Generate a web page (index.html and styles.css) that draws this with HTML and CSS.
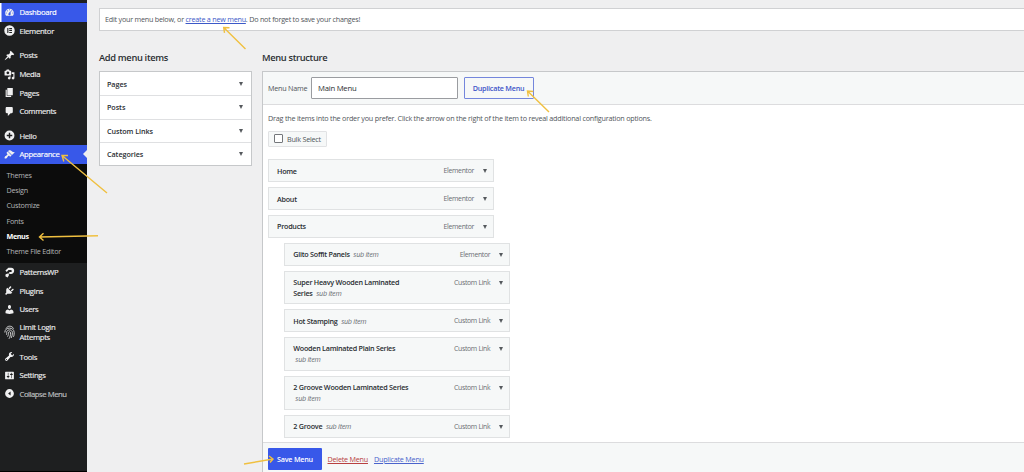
FILE: index.html
```html
<!DOCTYPE html>
<html lang="en">
<head>
    <meta charset="UTF-8">
    <meta name="viewport" content="width=device-width, initial-scale=1.0">
    <title>Menus</title>
    <link rel="stylesheet" href="styles.css">
</head>
<body>
    <div class="sidebar">
        <a class="nav-item active first">
            <svg class="icon" viewBox="0 0 20 20"><path d="M3.76 16h12.48c1.1-1.37 1.76-3.11 1.76-5 0-4.42-3.58-8-8-8s-8 3.58-8 8c0 1.89.66 3.63 1.76 5zM10 4c.55 0 1 .45 1 1s-.45 1-1 1-1-.45-1-1 .45-1 1-1zM6 6c.55 0 1 .45 1 1s-.45 1-1 1-1-.45-1-1 .45-1 1-1zm8 0c.55 0 1 .45 1 1s-.45 1-1 1-1-.45-1-1 .45-1 1-1zm-5.37 5.55L12 7v6c0 1.1-.9 2-2 2s-2-.9-2-2c0-.57.24-1.08.63-1.45zM4 10c.55 0 1 .45 1 1s-.45 1-1 1-1-.45-1-1 .45-1 1-1zm12 0c.55 0 1 .45 1 1s-.45 1-1 1-1-.45-1-1 .45-1 1-1z"/></svg>
            <span>Dashboard</span>
        </a>
        <a class="nav-item">
            <svg class="icon" viewBox="0 0 20 20"><path fill-rule="evenodd" d="M10 .5a9.5 9.5 0 1 0 0 19 9.5 9.5 0 0 0 0-19zM6 5.5h2v9H6zM9.5 5.5h5v2h-5zM9.5 9h5v2h-5zM9.5 12.5h5v2h-5z"/></svg>
            <span>Elementor</span>
        </a>
        <div class="separator"></div>
        <a class="nav-item">
            <svg class="icon" viewBox="0 0 20 20"><path d="M10.44 3.02l1.82-1.82 6.36 6.35-1.83 1.82c-1.05-.68-2.48-.57-3.41.36l-.75.75c-.92.93-1.04 2.35-.35 3.41l-1.83 1.82-2.41-2.41-2.8 2.79c-.42.42-3.38 2.71-3.8 2.29s1.86-3.39 2.28-3.81l2.79-2.79L4.1 9.36l1.83-1.82c1.05.69 2.48.57 3.4-.36l.75-.75c.93-.92 1.05-2.35.36-3.41z"/></svg>
            <span>Posts</span>
        </a>
        <a class="nav-item">
            <svg class="icon" viewBox="0 0 20 20"><path d="M13 11V4c0-.55-.45-1-1-1h-1.67L9 1H5L3.67 3H2c-.55 0-1 .45-1 1v7c0 .55.45 1 1 1h10c.55 0 1-.45 1-1zM7 4.5c1.38 0 2.5 1.12 2.5 2.5S8.38 9.5 7 9.5 4.5 8.38 4.5 7 5.62 4.5 7 4.5zM14 6h5v10.5c0 1.38-1.12 2.5-2.5 2.5S14 17.88 14 16.5s1.12-2.5 2.5-2.5c.17 0 .34.02.5.05V9h-3V6zm-4 8.05V13h2v3.5c0 1.38-1.12 2.5-2.5 2.5S7 17.88 7 16.5 8.12 14 9.5 14c.17 0 .34.02.5.05z"/></svg>
            <span>Media</span>
        </a>
        <a class="nav-item">
            <svg class="icon" viewBox="0 0 20 20"><path d="M6 15V2h10v13H6zm-1 1h8v2H3V5h2v11z"/></svg>
            <span>Pages</span>
        </a>
        <a class="nav-item">
            <svg class="icon" viewBox="0 0 20 20"><path d="M5 2h9c1.1 0 2 .9 2 2v7c0 1.1-.9 2-2 2h-2l-5 5v-5H5c-1.1 0-2-.9-2-2V4c0-1.1.9-2 2-2z"/></svg>
            <span>Comments</span>
        </a>
        <div class="separator"></div>
        <a class="nav-item">
            <svg class="icon" viewBox="0 0 20 20"><path fill-rule="evenodd" d="M10 1a9 9 0 1 0 0 18 9 9 0 0 0 0-18zM8.7 5h2.6v3.7H15v2.6h-3.7V15H8.7v-3.7H5V8.7h3.7z"/></svg>
            <span>Hello</span>
        </a>
        <a class="nav-item active current">
            <svg class="icon" viewBox="0 0 20 20"><path d="M14.48 11.06L7.41 3.99l1.5-1.5c.5-.56 2.3-.47 3.51.32 1.21.8 1.43 1.28 2.91 2.1 1.18.64 2.45 1.26 4.45.85zm-.71.71L6.7 4.7 4.93 6.47c-.39.39-.39 1.02 0 1.41l1.06 1.06c.39.39.39 1.03 0 1.42-.6.6-1.43 1.11-2.21 1.69-.35.26-.7.53-1.01.84C1.43 14.23.4 16.08 1.4 17.07c.99 1 2.84-.03 4.18-1.36.31-.31.58-.66.85-1.02.57-.78 1.08-1.61 1.69-2.21.39-.39 1.02-.39 1.41 0l1.06 1.06c.39.39 1.02.39 1.41 0z"/></svg>
            <span>Appearance</span>
        </a>
        <div class="submenu">
            <a>Themes</a>
            <a>Design</a>
            <a>Customize</a>
            <a>Fonts</a>
            <a class="selected">Menus</a>
            <a>Theme File Editor</a>
        </div>
        <a class="nav-item">
            <svg class="icon" viewBox="0 0 20 20"><path d="M2.500 6.500L8 1.500h5c3.200 0 5.500 2.200 5.500 5.200 0 3.300-2.500 5.800-5.700 5.800H9.500V9h2.800c1.200 0 1.900-.8 1.900-1.900s-.7-1.800-1.900-1.800H8.200L5 9zM3 13l5.500-1.500.5 3.500-2.500 4L2.500 17z"/></svg>
            <span>PatternsWP</span>
        </a>
        <a class="nav-item">
            <svg class="icon" viewBox="0 0 20 20"><path d="M13.11 4.36L9.87 7.6 8 5.73l3.24-3.24c.35-.34 1.05-.2 1.56.32.52.51.66 1.21.31 1.55zm-8 1.77l.91-1.12 9.01 9.01-1.19.84c-.71.71-2.63 1.16-3.82 1.16H6.14L4.9 17.26c-.59.59-1.54.59-2.12 0-.59-.58-.59-1.53 0-2.12l1.24-1.24v-3.88c0-1.13.4-3.19 1.09-3.89zm7.26 3.97l3.24-3.24c.34-.35 1.04-.21 1.55.31.52.51.66 1.21.31 1.55l-3.24 3.25z"/></svg>
            <span>Plugins</span>
        </a>
        <a class="nav-item">
            <svg class="icon" viewBox="0 0 20 20"><path d="M10 9.25c-2.27 0-2.73-3.44-2.73-3.44C7 4.02 7.82 2 9.97 2c2.16 0 2.98 2.02 2.71 3.81 0 0-.41 3.44-2.68 3.44zm0 2.57L12.72 10c2.39 0 4.52 2.33 4.52 4.53v2.49s-3.65 1.13-7.24 1.13c-3.65 0-7.24-1.13-7.24-1.13v-2.49c0-2.25 1.94-4.48 4.47-4.48z"/></svg>
            <span>Users</span>
        </a>
        <a class="nav-item two-line">
            <svg class="icon finger" viewBox="0 0 20 26"><path d="M3.500 6C5.500 2.500 8 1.500 10.500 1.500S16 3 17.500 6M1.500 13C1.500 7.500 5.500 5 10 5s8.500 3 8.500 8-.5 6-1.500 8M4.500 17c.5-1.500.3-2.500.3-4C4.800 10 7.500 8.300 10 8.300s5.300 2 5.300 5c0 4-.8 7-2.300 9.700M6.500 20.500c1.500-2.500 1.500-5 1.600-7.200.1-1 .9-1.700 1.900-1.700s2 .8 2 1.900c0 4-1 8-3 11"/></svg>
            <span>Limit Login<br>Attempts</span>
        </a>
        <a class="nav-item">
            <svg class="icon" viewBox="0 0 20 20"><path d="M16.68 9.77c-1.34 1.34-3.3 1.67-4.95.99l-5.41 6.52c-.99.99-2.59.99-3.58 0s-.99-2.59 0-3.57l6.52-5.42c-.68-1.65-.35-3.61.99-4.95 1.28-1.28 3.12-1.62 4.72-1.06l-2.89 2.89 2.82 2.82 2.86-2.87c.53 1.58.18 3.39-1.08 4.65zM3.81 16.21c.4.39 1.04.39 1.43 0 .4-.4.4-1.04 0-1.43-.39-.4-1.03-.4-1.43 0-.39.39-.39 1.03 0 1.43z"/></svg>
            <span>Tools</span>
        </a>
        <a class="nav-item">
            <svg class="icon" viewBox="0 0 20 20"><path d="M18 16V4c0-.55-.45-1-1-1H3c-.55 0-1 .45-1 1v12c0 .55.45 1 1 1h14c.55 0 1-.45 1-1zM8 11h1c.55 0 1 .45 1 1s-.45 1-1 1H8v1.500c0 .28-.22.5-.5.5s-.5-.22-.5-.5V13H6c-.55 0-1-.45-1-1s.45-1 1-1h1V5.500c0-.28.22-.5.5-.5s.5.22.5.5V11zm5-2h-1c-.55 0-1-.45-1-1s.45-1 1-1h1V5.500c0-.28.22-.5.5-.5s.5.22.5.5V7h1c.55 0 1 .45 1 1s-.45 1-1 1h-1v5.500c0 .28-.22.5-.5.5s-.5-.22-.5-.5V9z"/></svg>
            <span>Settings</span>
        </a>
        <a class="nav-item collapse">
            <svg class="icon" viewBox="0 0 20 20"><path fill-rule="evenodd" d="M10 2a8 8 0 1 0 0 16 8 8 0 0 0 0-16zM12 6.500v7L7.500 10z"/></svg>
            <span>Collapse Menu</span>
        </a>
    </div>

    <div class="content">
        <div class="notice">Edit your menu below, or <a>create a new menu</a>. Do not forget to save your changes!</div>
        <div class="columns">
            <div class="add-items">
                <h2>Add menu items</h2>
                <div class="accordion">
                    <div class="acc-row">Pages<i class="caret"></i></div>
                    <div class="acc-row">Posts<i class="caret"></i></div>
                    <div class="acc-row">Custom Links<i class="caret"></i></div>
                    <div class="acc-row">Categories<i class="caret"></i></div>
                </div>
            </div>
            <div class="structure">
                <h2>Menu structure</h2>
                <div class="panel">
                    <div class="panel-header">
                        <label>Menu Name</label>
                        <div class="name-input">Main Menu</div>
                        <div class="btn-outline">Duplicate Menu</div>
                    </div>
                    <div class="panel-body">
                        <p>Drag the items into the order you prefer. Click the arrow on the right of the item to reveal additional configuration options.</p>
                        <div class="bulk"><span class="checkbox"></span><span class="bulk-label">Bulk Select</span></div>
                        <div class="menu-list">
                            <div class="menu-item">
                                <div class="title"><b>Home</b></div>
                                <span class="type">Elementor</span><i class="caret"></i>
                            </div>
                            <div class="menu-item">
                                <div class="title"><b>About</b></div>
                                <span class="type">Elementor</span><i class="caret"></i>
                            </div>
                            <div class="menu-item">
                                <div class="title"><b>Products</b></div>
                                <span class="type">Elementor</span><i class="caret"></i>
                            </div>
                            <div class="menu-item sub">
                                <div class="title"><b>Glito Soffit Panels</b> <em>sub item</em></div>
                                <span class="type">Elementor</span><i class="caret"></i>
                            </div>
                            <div class="menu-item sub tall">
                                <div class="title"><b>Super Heavy Wooden Laminated<br>Series</b> <em>sub item</em></div>
                                <span class="type">Custom Link</span><i class="caret"></i>
                            </div>
                            <div class="menu-item sub">
                                <div class="title"><b>Hot Stamping</b> <em>sub item</em></div>
                                <span class="type">Custom Link</span><i class="caret"></i>
                            </div>
                            <div class="menu-item sub tall">
                                <div class="title"><b>Wooden Laminated Plain Series</b><br><em>sub item</em></div>
                                <span class="type">Custom Link</span><i class="caret"></i>
                            </div>
                            <div class="menu-item sub tall">
                                <div class="title"><b>2 Groove Wooden Laminated Series</b><br><em>sub item</em></div>
                                <span class="type">Custom Link</span><i class="caret"></i>
                            </div>
                            <div class="menu-item sub">
                                <div class="title"><b>2 Groove</b> <em>sub item</em></div>
                                <span class="type">Custom Link</span><i class="caret"></i>
                            </div>
                        </div>
                    </div>
                    <div class="panel-footer">
                        <div class="btn-save">Save Menu</div>
                        <a class="delete">Delete Menu</a>
                        <a class="duplicate">Duplicate Menu</a>
                    </div>
                </div>
            </div>
        </div>
    </div>

    <!-- pointer arrows -->
    <svg class="arrows" viewBox="0 0 1024 472">
        <path d="M245.500 49L223.700 27.500M224.500 32.800L223.700 27.500L229.500 27.800"/>
        <path d="M107 193L62 155.500M63.800 161.500L62 155.500L68 155.500"/>
        <path d="M98 235.700L39.500 237M43.500 233.300L39.500 237L43.500 240.500"/>
        <path d="M549 112L527.500 91M528.300 96.500L527.500 91L533.300 91.500"/>
        <path d="M244 464L273 459M269 456L273 459L270 462.500"/>
    </svg>
</body>
</html>
```
FILE: styles.css
```css
:root{
    --blue: #3858e9;
    --link: #3c59c8;
    --gray-bg: #efeff0;
    --light: #f6f8f8;
    --border: #c6c8ca;
    --text: #50555a;
    --dark: #2a2e32;
}

*{
    box-sizing: border-box;
    padding: 0;
    margin: 0;
}
body{
    width: 1024px;
    height: 472px;
    display: flex;
    overflow: hidden;
    position: relative;
    background: var(--gray-bg);
    color: var(--text);
    font-family: "Open Sans", "Noto Sans", sans-serif;
    font-size: 7.200px;
    letter-spacing: -0.220px;
    line-height: 10px;
}

/* sidebar */
.sidebar{
    width: 87px;
    height: 472px;
    flex-shrink: 0;
    padding-top: 3px;
    background: #1e1f20;
    border-bottom: 1px solid #000;
}
.nav-item{
    height: 18.650px;
    padding-left: 4.300px;
    display: flex;
    align-items: center;
    gap: 4.200px;
    color: #eeeeef;
    font-size: 7.700px;
    letter-spacing: -0.300px;
    -webkit-text-stroke: 0.15px currentColor;
}
.icon{
    width: 11px;
    height: 11px;
    flex-shrink: 0;
    fill: #f0f0f1;
}
.finger{
    height: 15px;
    fill: none;
    stroke: #d6d7d8;
    stroke-width: 1.700;
}
.active{
    background: var(--blue);
    color: #fff;
}
.first{
    box-shadow: inset 1.500px 0 #fff;
}
.current{
    position: relative;
}
.current::after{
    content: '';
    position: absolute;
    right: 0;
    top: 5px;
    border: 4.500px solid transparent;
    border-left: 0;
    border-right-color: var(--gray-bg);
}
.separator{
    height: 5.850px;
}
.submenu{
    height: 99px;
    padding: 4px 0 0 6.500px;
    background: #0c0c0c;
}
.submenu a{
    display: block;
    height: 15.250px;
    line-height: 15.250px;
    color: #b4b6b8;
}
.submenu .selected{
    color: #fff;
    font-weight: 700;
    letter-spacing: -0.380px;
}
.two-line{
    height: 28.500px;
    line-height: 9.800px;
}
.collapse{
    color: #c0c2c4;
    letter-spacing: -0.450px;
}

/* main area */
.content{
    flex-grow: 1;
    padding: 8.400px 0 0 12px;
}
.notice{
    height: 22.300px;
    padding-left: 5px;
    line-height: 21px;
    letter-spacing: -0.225px;
    background: #fff;
    border: 1px solid #d0d1d3;
    border-right: 0;
}
.notice a{
    color: var(--link);
    text-decoration: underline;
}
.columns{
    display: flex;
    gap: 10.500px;
    margin-top: 20px;
}
h2{
    height: 20.300px;
    line-height: 14px;
    font-size: 9.300px;
    font-weight: 600;
    letter-spacing: -0.330px;
    color: var(--dark);
}
.add-items{
    width: 152.500px;
    flex-shrink: 0;
}
.accordion{
    border: 1px solid var(--border);
    background: #fff;
}
.acc-row{
    height: 23.300px;
    padding: 0 8px 0 7px;
    display: flex;
    align-items: center;
    justify-content: space-between;
    color: var(--dark);
    font-weight: 600;
    letter-spacing: -0.060px;
}
.acc-row + .acc-row{
    border-top: 1px solid #dfe0e2;
}
.caret{
    width: 0;
    height: 0;
    border: 2.500px solid transparent;
    border-top: 4px solid #55595d;
    border-bottom: 0;
}
.structure{
    flex-grow: 1;
}
.panel{
    background: #fff;
    border: 1px solid var(--border);
    border-right: 0;
}
.panel-header{
    height: 33px;
    padding-left: 5px;
    display: flex;
    align-items: center;
    background: var(--light);
    border-bottom: 1px solid #dcdcde;
}
.panel-header label{
    width: 43px;
}
.name-input{
    width: 147px;
    height: 22px;
    padding-left: 6px;
    line-height: 21px;
    font-size: 7.700px;
    letter-spacing: -0.230px;
    color: var(--dark);
    background: #fff;
    border: 1px solid #9a9ca0;
    border-radius: 1px;
}
.btn-outline{
    width: 70px;
    height: 22px;
    margin-left: 5.500px;
    line-height: 20px;
    text-align: center;
    font-weight: 600;
    color: #4055c8;
    border: 1px solid #7486dc;
    border-radius: 1px;
}
.panel-body{
    height: 337px;
    padding: 8.400px 0 0 5px;
}
.panel-body p{
    letter-spacing: -0.205px;
}
.bulk{
    width: 59px;
    height: 16px;
    margin-top: 7.600px;
    padding-left: 5px;
    display: flex;
    align-items: center;
    gap: 4px;
    background: var(--light);
    border: 1px solid #e1e2e4;
    border-radius: 1px;
}
.checkbox{
    width: 9px;
    height: 9px;
    background: #fff;
    border: 1px solid #74777b;
    border-radius: 1px;
}
.menu-list{
    margin-top: 12.500px;
    display: flex;
    flex-direction: column;
    gap: 4.900px;
}
.menu-item{
    width: 226px;
    height: 22.900px;
    padding: 6px 6.500px 0 8px;
    display: flex;
    align-items: flex-start;
    background: var(--light);
    border: 1px solid #e0e2e3;
}
.sub{
    margin-left: 16.300px;
}
.tall{
    height: 33.900px;
}
.title{
    flex-grow: 1;
    margin-top: -0.700px;
    line-height: 10.800px;
    letter-spacing: -0.260px;
}
.title b{
    font-weight: 600;
    color: var(--dark);
}
.title em{
    color: #6a6e73;
    margin-left: 2px;
}
.type{
    color: #6a6e73;
    margin-right: 8.500px;
    font-size: 6.900px;
    letter-spacing: -0.320px;
}
.menu-item .caret{
    margin-top: 3px;
}
.panel-footer{
    height: 30px;
    padding: 5px 0 0 5px;
    display: flex;
    line-height: 22px;
    background: var(--light);
    border-top: 1px solid #dcdcde;
}
.panel-footer a{
    text-decoration: underline;
}
.btn-save{
    width: 54px;
    height: 22px;
    text-align: center;
    color: #fff;
    background: var(--blue);
    font-weight: 600;
    border-radius: 1px;
}
.delete{
    margin-left: 5.500px;
    color: #b84040;
}
.duplicate{
    margin-left: 6px;
    color: #4a63cc;
}

.arrows{
    position: absolute;
    left: 0;
    top: 0;
    width: 1024px;
    height: 472px;
    fill: none;
    stroke: #f0c040;
    stroke-width: 1.400;
    pointer-events: none;
}
```
